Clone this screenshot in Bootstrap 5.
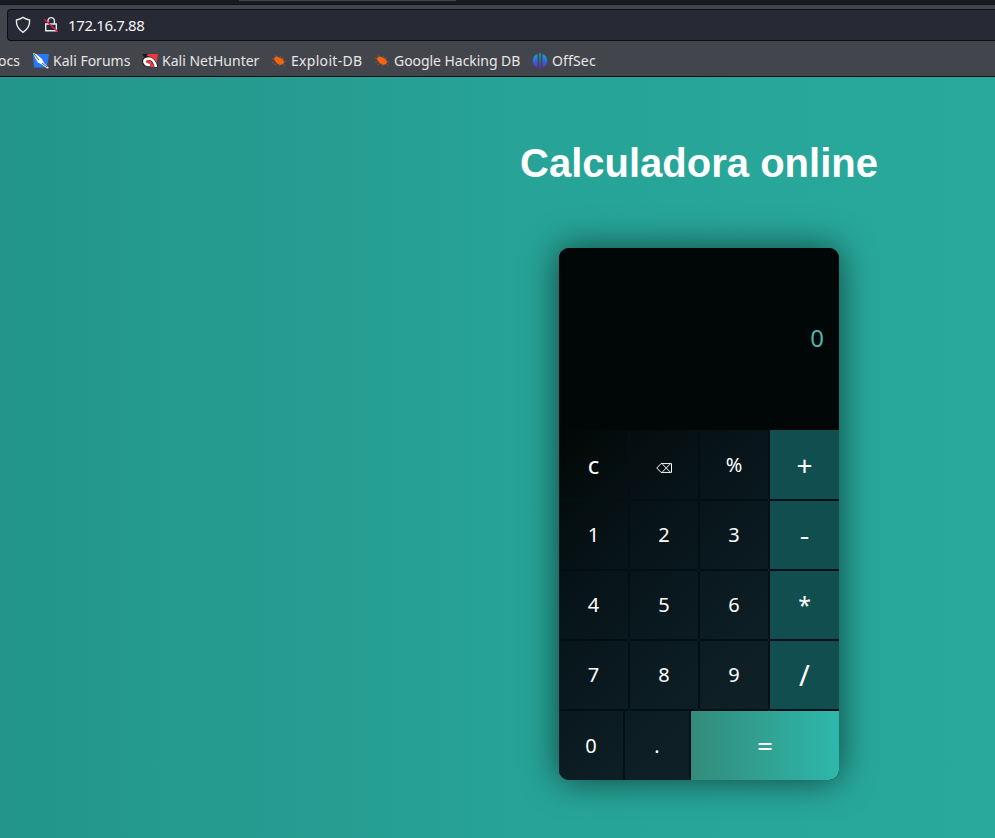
<!DOCTYPE html>
<html lang="es">
<head>
<meta charset="utf-8">
<title>Calculadora online</title>
<meta name="viewport" content="width=device-width, initial-scale=1">
<link href="https://cdn.jsdelivr.net/npm/bootstrap@5.3.0/dist/css/bootstrap.min.css" rel="stylesheet">
<style>
body{height:838px;font-family:"Noto Sans",sans-serif;background:linear-gradient(90deg,#23958a,#27a498 58%,#28a99c);}
.chrome{height:77px;background:#43454c;border-bottom:1px solid #0d0e12;color:#e6e6e8}
.tabs{height:5px;background:#1a1b20;border-bottom:1px solid #111216}
.tab-end{width:217px;height:1px;margin-left:239px;background:#46484f}
.url{height:32px;margin:4px 0 0 7px;border:1px solid #0d0e12;border-right:0;border-radius:4px 0 0 4px;background:#272935;font-size:15px;color:#f4f4f5}
.url svg{flex:none}
.shield{margin-left:7px}
.lock{margin-left:12px}
.address{margin-left:9px;letter-spacing:-.38px;line-height:20px}
.marks{height:35px;padding-top:4px;font-size:14px;line-height:20px}
.marks svg{flex:none}
.mk{gap:4px;flex:none}
.first-mk{margin-left:-2px}
.exploit{letter-spacing:.3px}
.google{letter-spacing:-.05px}
.offsec{letter-spacing:.15px}
.title{margin:64px 0 0;font:700 40px/44px "Liberation Sans",Arial,sans-serif}
.stage,.title-wrap{width:280px;margin-left:559px}
.calc{width:280px;margin-top:63px;border-radius:10px;box-shadow:0 0 35px rgba(0,0,0,.6);background:#020f16;color:#fff}
.screen{height:182px;background:#010706;color:#4db6ac;font-size:24px;line-height:34px;padding:0 15px 2px 0}
.pad{background:linear-gradient(135deg,#010706 0%,#061012 20%,#07141a 30%,#0c1d23 60%,#13242e 100%)}
.keys{display:grid;grid-template-columns:69px 68px 68px 69px;grid-template-rows:69px repeat(3,68px);gap:2px}
.last{display:grid;grid-template-columns:64px 64px 148px;gap:2px;height:69px;margin-top:2px}
.key{border:0;padding:0;background:transparent;color:#fff;font-size:20px;line-height:30px;box-shadow:2px 0 0 #020f16,0 2px 0 #020f16}
.op{background:#104e50;font-size:25px}
.eq{background:linear-gradient(90deg,#348b7b,#2db8ab);font-size:28px;padding-bottom:2px}
.key span{display:block}
.clear{font-size:24px;padding-top:1px}
.plus{font-size:28px;padding-top:1px}
.minus{transform:scaleX(1.2)}
.times{font-size:23px;padding-bottom:1px}
.slash{font-size:29px}
.erase{margin-top:3px}
</style>
<script src="https://cdn.jsdelivr.net/npm/bootstrap@5.3.0/dist/js/bootstrap.bundle.min.js"></script>
</head>
<body class="overflow-hidden">
<header class="chrome overflow-hidden">
 <div class="tabs"><div class="tab-end"></div></div>
 <div class="url d-flex align-items-center">
  <svg class="shield" width="16" height="18" viewBox="0 0 16 18" fill="none" stroke="#e8e8ea" stroke-width="1.4"><path d="M8 1.4Q11 3.5 14.6 4Q15 12 8 16.4Q1 12 1.4 4Q5 3.5 8 1.4Z"/></svg>
  <svg class="lock" width="16" height="18" viewBox="0 0 16 18" fill="none" stroke="#e8e8ea" stroke-width="1.4"><path d="M5 8V4.800a3.200 3.200 0 0 1 6.400 0V8M2.700 8h10.600v6.700H2.700z"/><path d="M1.300 3.200l13.500 12.500" stroke="#e31b50" stroke-width="1.500"/></svg>
  <span class="address">172.16.7.88</span>
 </div>
 <nav class="marks d-flex align-items-center text-nowrap">
  <span class="mk first-mk" style="width:35px">ocs</span>
  <span class="mk d-flex align-items-center" style="width:109px"><svg width="16" height="16" viewBox="0 0 16 16"><path d="M0 1h16l-2 13.500H1z" fill="#267bf5"/><path d="M0 0l3 1 6 5 2 4 5 5-2 .5-5-4-4-2-3-5z" fill="#fff"/><path d="M1 1l5 6M9 10l5 4" stroke="#222b38" stroke-width=".8"/></svg><span>Kali Forums</span></span>
  <span class="mk d-flex align-items-center" style="width:129px"><svg width="16" height="16" viewBox="0 0 16 16"><path d="M2 1h14l-2 13H3z" fill="#ef363d"/><path d="M0 1h6L3 5z" fill="#17191d"/><path d="M14.500 14.500Q12 6 6 5 1.500 5.500 2 9q1 3.500 6 3.500" fill="none" stroke="#17191d" stroke-width="3.800"/><path d="M14 14Q12 5.500 6.500 5.500 2 6 2.500 9q1 3 5.500 3" fill="none" stroke="#fff" stroke-width="2.700"/></svg><span>Kali NetHunter</span></span>
  <span class="mk d-flex align-items-center" style="width:103px"><svg width="16" height="16" viewBox="0 0 16 16"><path d="M3 5q3-3 6 0 4 1 4 5-2 3-6 1-4-3-4-6Z" fill="#f16511"/><path d="M1 5l3 2M4 2l2 3M9 3l2 4M11 5l2 1M13 8l2 .5M3 9l-2 .5M6 11l-3 .5M9 11l-1 2M13 11l1 2" stroke="#f16511" stroke-opacity=".55" fill="none" stroke-width=".8"/></svg><span class="exploit">Exploit-DB</span></span>
  <span class="mk d-flex align-items-center" style="width:158px"><svg width="16" height="16" viewBox="0 0 16 16"><path d="M3 5q3-3 6 0 4 1 4 5-2 3-6 1-4-3-4-6Z" fill="#f16511"/><path d="M1 5l3 2M4 2l2 3M9 3l2 4M11 5l2 1M13 8l2 .5M3 9l-2 .5M6 11l-3 .5M9 11l-1 2M13 11l1 2" stroke="#f16511" stroke-opacity=".55" fill="none" stroke-width=".8"/></svg><span class="google">Google Hacking DB</span></span>
  <span class="mk d-flex align-items-center"><svg width="16" height="16" viewBox="0 0 16 16"><defs><linearGradient id="os" gradientUnits="userSpaceOnUse" x1="0" y1="0" x2="0" y2="16"><stop stop-color="#08b0d2"/><stop offset="1" stop-color="#5d24d6"/></linearGradient></defs><path d="M5.500 1v13.500Q1 13 .7 8 .7 3 5.500 1ZM10.500 1v13.500Q15 13 15.300 8 15.300 3 10.500 1ZM7.300 0h1.400v16H7.300z" fill="url(#os)"/></svg><span class="offsec">OffSec</span></span>
 </nav>
</header>
<main>
 <div class="title-wrap d-flex justify-content-center"><h1 class="title text-white text-nowrap">Calculadora online</h1></div>
 <div class="stage">
  <section class="calc overflow-hidden">
   <div class="screen d-flex align-items-center justify-content-end">0</div>
   <div class="pad">
    <div class="keys">
     <button class="key clear">c</button><button class="key"><svg class="erase" width="17" height="10" viewBox="0 0 17 10" fill="none" stroke="#fff"><path d="M.8 5L5 .6h10.500v8.800H5zM6.500 1.200l7.500 7.600M14 1.200L6.500 8.800"/></svg></button><button class="key">%</button><button class="key op plus">+</button>
     <button class="key">1</button><button class="key">2</button><button class="key">3</button><button class="key op"><span class="minus">-</span></button>
     <button class="key">4</button><button class="key">5</button><button class="key">6</button><button class="key op times">*</button>
     <button class="key">7</button><button class="key">8</button><button class="key">9</button><button class="key op slash">/</button>
    </div>
    <div class="last"><button class="key">0</button><button class="key">.</button><button class="key eq">=</button></div>
   </div>
  </section>
 </div>
</main>
</body>
</html>
